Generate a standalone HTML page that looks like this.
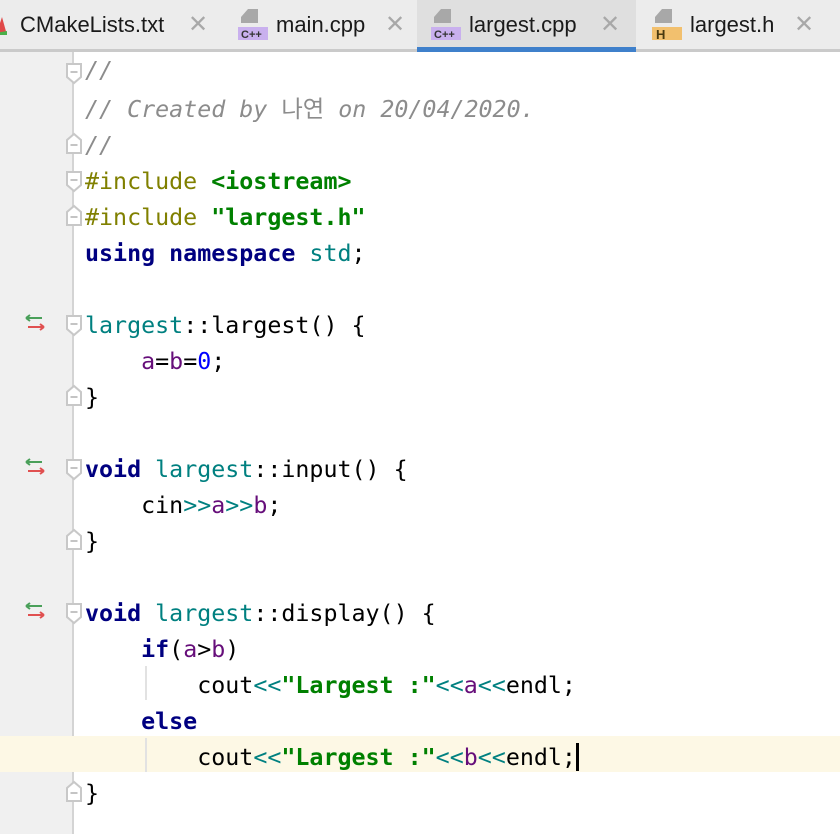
<!DOCTYPE html>
<html><head><meta charset="utf-8"><style>
*{margin:0;padding:0;box-sizing:border-box}
html,body{width:840px;height:834px;overflow:hidden;background:#fff}
#tabs{position:absolute;left:0;top:0;width:840px;height:52px;background:#ececec;border-bottom:3px solid #cacaca}
.tab{position:absolute;top:0;height:49px;font-family:"Liberation Sans",sans-serif;font-size:22px;color:#1a1a1a;line-height:50px}
.tab .x{position:absolute;top:0;color:#a8a8a8;font-size:24px}
.active{background:#dfdfdf;height:52px}
.active:after{content:"";position:absolute;left:0;right:0;bottom:0;height:5px;background:#3f80cb}
#gutter{position:absolute;left:0;top:52px;width:74px;height:782px;background:#f0f0f0;border-right:2px solid #d4d4d4}
#hl{position:absolute;left:0;top:736px;width:840px;height:36px;background:#fdf8e5}
#code{position:absolute;left:85px;top:53px;font-family:"DejaVu Sans Mono","Liberation Mono","Noto Sans CJK KR",monospace;font-size:23.3px;line-height:36px;white-space:pre;color:#000}
.c{color:#8c8c8c;font-style:italic}
.k{color:#000080;font-weight:bold}
.p{color:#808000}
.s{color:#008000;font-weight:bold}
.t{color:#008080}
.v{color:#660e7a}
.n{color:#0000ff}
.guide{position:absolute;left:145px;width:2px;background:#e2e2e2}
</style></head><body>
<div id="tabs">
 <div class="tab" style="left:0;width:218px">
  <svg style="position:absolute;left:-4px;top:15px" width="14" height="22"><polygon points="0,20 6,2 11,20" fill="#e04848"/><polygon points="0,20 11,20 11,16 0,18" fill="#4ab04a"/></svg>
  <span style="position:absolute;left:20px">CMakeLists.txt</span><span class="x" style="left:188px">✕</span></div>
 <div class="tab" style="left:218px;width:199px">
  <svg style="position:absolute;left:20px;top:9px" width="30" height="32"><polygon points="10,0 20,0 20,14 3,14 3,8" fill="#a8a8a8"/><rect x="0" y="18" width="30" height="13" fill="#c9b0ee"/><text x="3" y="29" font-family="Liberation Sans" font-size="11" font-weight="bold" fill="#333">C++</text></svg>
  <span style="position:absolute;left:58px">main.cpp</span><span class="x" style="left:167px">✕</span></div>
 <div class="tab active" style="left:417px;width:219px">
  <svg style="position:absolute;left:14px;top:9px" width="30" height="32"><polygon points="10,0 20,0 20,14 3,14 3,8" fill="#a8a8a8"/><rect x="0" y="18" width="30" height="13" fill="#c9b0ee"/><text x="3" y="29" font-family="Liberation Sans" font-size="11" font-weight="bold" fill="#333">C++</text></svg>
  <span style="position:absolute;left:52px">largest.cpp</span><span class="x" style="left:183px">✕</span></div>
 <div class="tab" style="left:636px;width:204px">
  <svg style="position:absolute;left:16px;top:9px" width="30" height="32"><polygon points="10,0 20,0 20,14 3,14 3,8" fill="#a8a8a8"/><rect x="0" y="18" width="30" height="13" fill="#f2c06e"/><text x="4" y="30" font-family="Liberation Sans" font-size="13" font-weight="bold" fill="#4a3a10">H</text></svg>
  <span style="position:absolute;left:54px">largest.h</span><span class="x" style="left:158px">✕</span></div>
</div>
<div id="gutter"></div>
<div id="hl"></div>
<div class="guide" style="top:666px;height:34px"></div>
<div class="guide" style="top:738px;height:34px"></div>
<svg style="position:absolute;left:0;top:0" width="90" height="834">
 <g fill="#fff" stroke="#c8c8c8" stroke-width="2">
  <path d="M67,64 h14 v13 l-7,6 l-7,-6 z"/>
  <path d="M67,172 h14 v13 l-7,6 l-7,-6 z"/>
  <path d="M67,316 h14 v13 l-7,6 l-7,-6 z"/>
  <path d="M67,460 h14 v13 l-7,6 l-7,-6 z"/>
  <path d="M67,604 h14 v13 l-7,6 l-7,-6 z"/>
  <path d="M67,153 h14 v-13 l-7,-6 l-7,6 z"/>
  <path d="M67,225 h14 v-13 l-7,-6 l-7,6 z"/>
  <path d="M67,405 h14 v-13 l-7,-6 l-7,6 z"/>
  <path d="M67,549 h14 v-13 l-7,-6 l-7,6 z"/>
  <path d="M67,801 h14 v-13 l-7,-6 l-7,6 z"/>
 </g>
 <g stroke="#b0b0b0" stroke-width="1.5">
  <path d="M70.5,72h7M70.5,180h7M70.5,324h7M70.5,468h7M70.5,612h7M70.5,145h7M70.5,217h7M70.5,397h7M70.5,541h7M70.5,793h7"/>
 </g>
 <g stroke-width="2" fill="none">
  <g><path d="M26,318h16M26,318l4,-3M26,318l4,3" stroke="#4aa05a"/><path d="M28,327h16M44,327l-4,-3M44,327l-4,3" stroke="#e05050"/></g>
  <g transform="translate(0,144)"><path d="M26,318h16M26,318l4,-3M26,318l4,3" stroke="#4aa05a"/><path d="M28,327h16M44,327l-4,-3M44,327l-4,3" stroke="#e05050"/></g>
  <g transform="translate(0,288)"><path d="M26,318h16M26,318l4,-3M26,318l4,3" stroke="#4aa05a"/><path d="M28,327h16M44,327l-4,-3M44,327l-4,3" stroke="#e05050"/></g>
 </g>
</svg>
<div id="code"><span class="c">//</span>
<span class="c">// Created by <span style="font-style:normal;font-family:'Noto Sans CJK KR',sans-serif">나연</span> on 20/04/2020.</span>
<span class="c">//</span>
<span class="p">#include </span><span class="s">&lt;iostream&gt;</span>
<span class="p">#include </span><span class="s">"largest.h"</span>
<span class="k">using namespace</span> <span class="t">std</span>;

<span class="t">largest</span>::largest() {
    <span class="v">a</span>=<span class="v">b</span>=<span class="n">0</span>;
}

<span class="k">void</span> <span class="t">largest</span>::input() {
    cin<span class="t">&gt;&gt;</span><span class="v">a</span><span class="t">&gt;&gt;</span><span class="v">b</span>;
}

<span class="k">void</span> <span class="t">largest</span>::display() {
    <span class="k">if</span>(<span class="v">a</span>&gt;<span class="v">b</span>)
        cout<span class="t">&lt;&lt;</span><span class="s">"Largest :"</span><span class="t">&lt;&lt;</span><span class="v">a</span><span class="t">&lt;&lt;</span>endl;
    <span class="k">else</span>
        cout<span class="t">&lt;&lt;</span><span class="s">"Largest :"</span><span class="t">&lt;&lt;</span><span class="v">b</span><span class="t">&lt;&lt;</span>endl;<span style="display:inline-block;width:3px;height:28px;background:#000;vertical-align:-6px"></span>
}</div>
</body></html>
